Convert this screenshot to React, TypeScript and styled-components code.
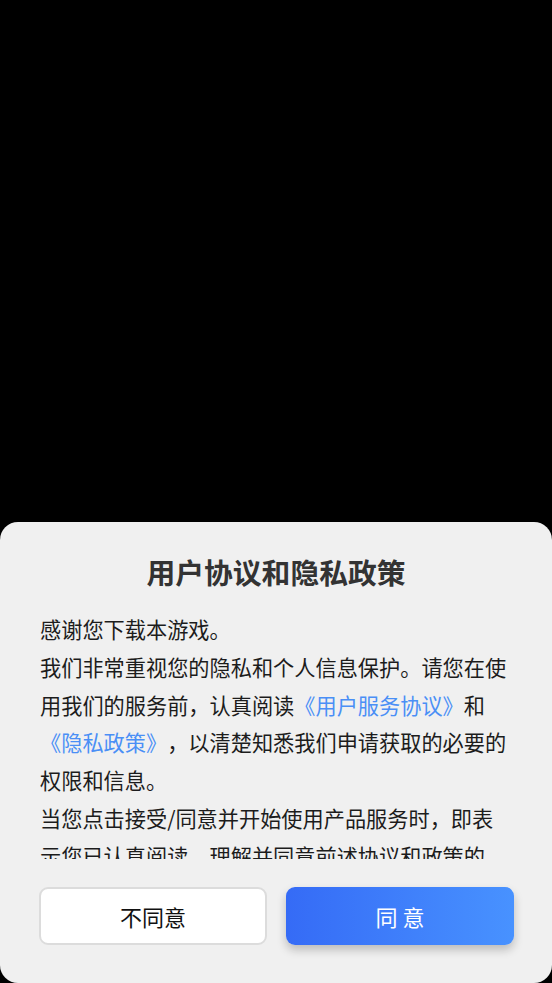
import React from "react";
import styled, { createGlobalStyle } from "styled-components";

const Global = createGlobalStyle`
  html, body {
    margin: 0;
    padding: 0;
    background: #000;
  }
  * { box-sizing: border-box; }
`;

const Screen = styled.div`
  height: 983px;
  background: #000;
  display: flex;
  flex-direction: column;
  justify-content: flex-end;
  font-family: "Noto Sans CJK SC", "Noto Sans", sans-serif;
  text-spacing-trim: space-all;
`;

const Sheet = styled.div`
  height: 461px;
  background: #f0f0f0;
  border-radius: 18px;
  display: flex;
  flex-direction: column;
  padding: 29px 0 37px;
`;

const Title = styled.h1`
  margin: 0;
  text-align: center;
  font-size: 28.8px;
  line-height: 41px;
  font-weight: 700;
  color: #333;
  letter-spacing: 0;
`;

const Body = styled.div`
  margin: 18px 41px 0 40px;
  height: 249px;
  overflow: hidden;
  font-size: 21.2px;
  line-height: 37.8px;
  color: #1c1c1c;
  text-spacing-trim: space-all;
`;

const Para = styled.p`
  margin: 0;
`;

const Link = styled.span`
  color: #4a8ff6;
`;

const Actions = styled.div`
  margin-top: 28px;
  padding: 0 38px 0 39px;
  display: grid;
  grid-template-columns: 1fr 1fr;
  gap: 19px;
`;

const Button = styled.button<{ $primary?: boolean }>`
  height: 58px;
  border-radius: 9px;
  font-family: "Noto Sans CJK SC", "Noto Sans", sans-serif;
  font-size: 22px;
  display: flex;
  align-items: center;
  justify-content: center;
  cursor: pointer;
  padding: 0;
  ${(p) =>
    p.$primary
      ? `
    border: none;
    color: #fff;
    background: linear-gradient(90deg, #356bf6 0%, #4892ff 100%);
    box-shadow: 0 5px 10px rgba(0, 0, 0, 0.22);
  `
      : `
    border: 2px solid #dcdcdc;
    color: #111;
    background: #fff;
  `}
`;

export default function App() {
  return (
    <>
      <Global />
      <Screen>
        <Sheet>
          <Title>用户协议和隐私政策</Title>
          <Body>
            <Para>感谢您下载本游戏。</Para>
            <Para>
              我们非常重视您的隐私和个人信息保护。请您在使用我们的服务前，认真阅读
              <Link>《用户服务协议》</Link>和<Link>《隐私政策》</Link>
              ，以清楚知悉我们申请获取的必要的权限和信息。
            </Para>
            <Para>
              当您点击接受/同意并开始使用产品服务时，即表示您已认真阅读、理解并同意前述协议和政策的《全部条款》，并同意我们按照上述协议和政策收集、使用和保护您的个人信息。
            </Para>
          </Body>
          <Actions>
            <Button>不同意</Button>
            <Button $primary>同 意</Button>
          </Actions>
        </Sheet>
      </Screen>
    </>
  );
}
